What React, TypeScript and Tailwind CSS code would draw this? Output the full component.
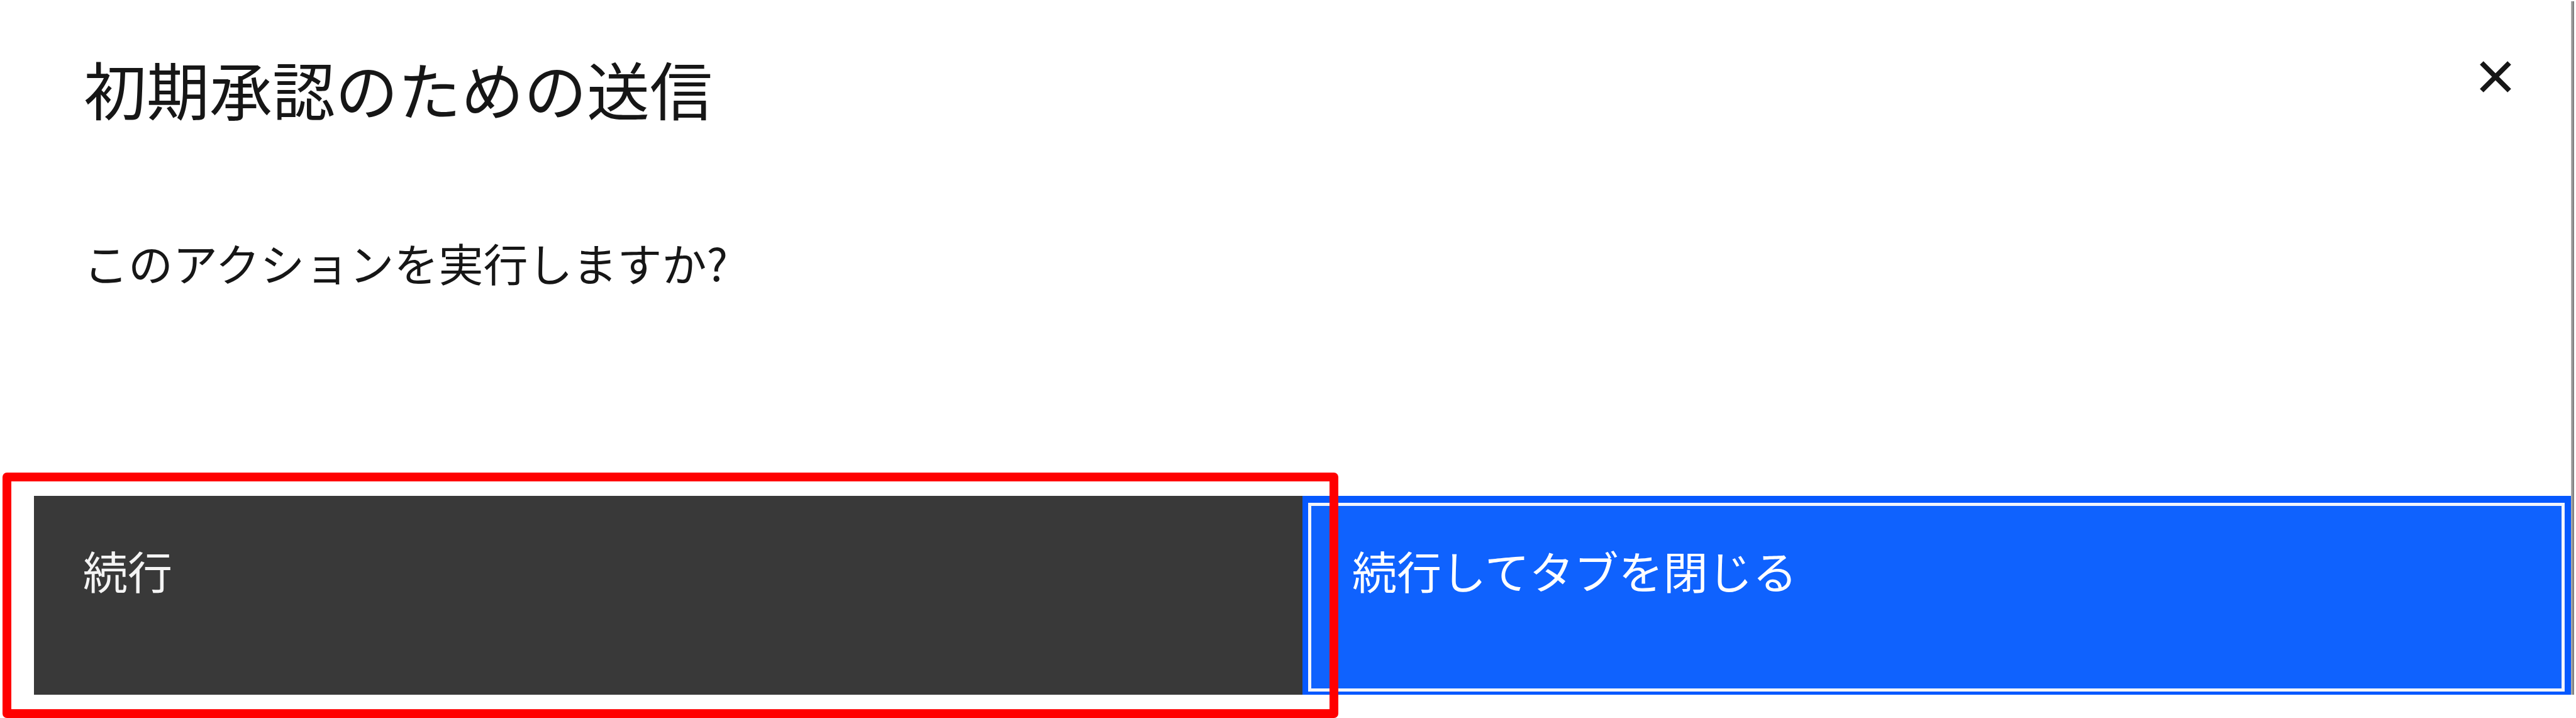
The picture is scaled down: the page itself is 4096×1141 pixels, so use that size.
import React from "react";

function CloseIcon() {
  return (
    <svg viewBox="0 0 52 52" className="h-[52px] w-[52px]" aria-hidden="true">
      <path d="M4 4 L48 48 M48 4 L4 48" stroke="#161616" strokeWidth="8" fill="none" />
    </svg>
  );
}

function Header() {
  return (
    <header className="flex items-start justify-between pr-[94px] pl-[133px]">
      <h1 id="dialog-title" className="pt-[80px] text-[100px] leading-[120px] font-normal">
        初期承認のための送信
      </h1>
      <button type="button" aria-label="閉じる" className="mt-[96px]">
        <CloseIcon />
      </button>
    </header>
  );
}

function Actions() {
  return (
    <footer className="grid h-[316px] grid-cols-2 pl-[54px]">
      <div className="relative flex">
        <button
          type="button"
          className="flex flex-1 items-start bg-[#393939] pt-[72px] pl-[78px] text-left text-[71px] leading-[90px] text-[#f4f4f4]"
        >
          続行
        </button>
        <div className="pointer-events-none absolute -top-[37px] -right-[57px] -bottom-[37px] -left-[50px] z-10 rounded-[7px] border-[14px] border-[#ff0000]" />
      </div>
      <button
        type="button"
        className="flex border-t-[11px] border-r-[10px] border-b-[5px] border-l-[9px] border-[#0558ff] bg-[#0f62fe] text-left text-[71px] leading-[90px] text-white"
      >
        <span className="flex-1 self-stretch border-[5px] border-[#f2f4fb] pt-[56px] pl-[65px]">
          続行してタブを閉じる
        </span>
      </button>
    </footer>
  );
}

export default function App() {
  return (
    <div
      lang="ja"
      className="flex min-h-screen flex-col bg-white pr-[3px] pb-[37px] font-['Noto_Sans_CJK_JP',sans-serif] text-[#161616]"
    >
      <div role="dialog" aria-labelledby="dialog-title" className="flex flex-1">
        <div className="flex flex-1 flex-col">
          <Header />
          <p className="grow pt-[171px] pl-[133px] text-[71px] leading-[90px]">
            このアクションを実行しますか?
          </p>
          <Actions />
        </div>
        <div className="mt-[2px] w-[5px] bg-linear-to-r from-[#b4b4b4] to-[#757575]" />
      </div>
    </div>
  );
}
